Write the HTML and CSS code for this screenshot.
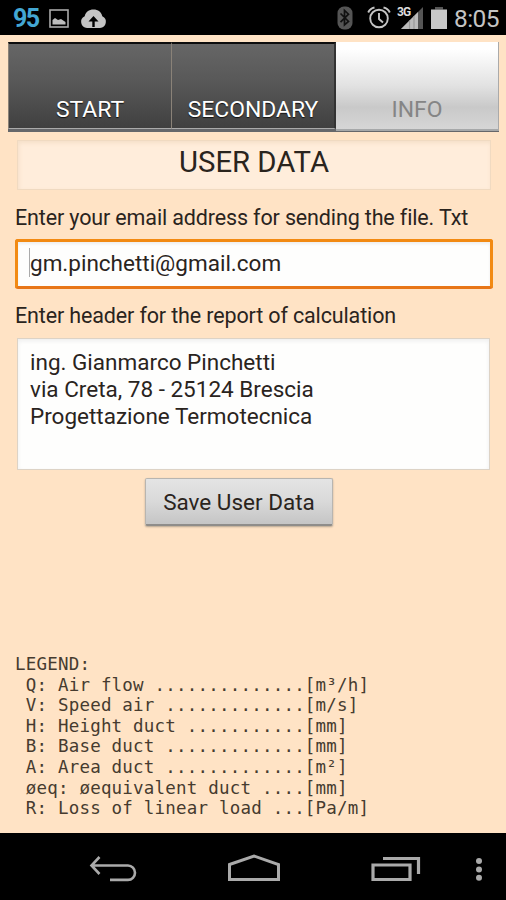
FILE: index.html
```html
<!DOCTYPE html>
<html lang="en">
<head>
<meta charset="utf-8">
<title>User Data</title>
<link rel="stylesheet" href="styles.css">
</head>
<body>
<div class="screen">
  <header class="status">
    <span class="percent">95</span>
    <svg class="i-image" width="20" height="19" viewBox="0 0 20 19"><rect x="1" y="1" width="18" height="17" fill="none" stroke="#aaa" stroke-width="1.6"/><path d="M3.500 15.500V11l2.500-2 3 2 3-1 4.500 3v2.500z" fill="#bdbdbd"/></svg>
    <svg class="i-cloud" width="27" height="20" viewBox="0 0 27 20"><path d="M7 19a6.200 6.200 0 0 1-2.300-11.800C5.500 3 9 .5 13.500.5S21.500 3 22.300 7.200A6.200 6.200 0 0 1 20 19z" fill="#c4c4c4"/><path d="M13.500 7l5 5.500h-3.800V18h-2.400v-5.500H8.500z" fill="#000"/></svg>
    <svg class="i-bt" width="16" height="24" viewBox="0 0 16 24"><rect x=".5" y=".5" width="15" height="23" rx="6.500" fill="#555"/><path d="M3.500 7.500l8 8L7.500 19V4.500l4 3.700-8 8" fill="none" stroke="#111" stroke-width="1.700"/></svg>
    <svg class="i-alarm" width="24" height="23" viewBox="0 0 24 23"><circle cx="12" cy="12.500" r="8.800" fill="none" stroke="#c4c4c4" stroke-width="1.900"/><path d="M12 7v6l4 3.500M1.200 6.500Q3 2.500 7.500 1.500M22.800 6.500Q21 2.500 16.500 1.500" fill="none" stroke="#c4c4c4" stroke-width="1.900"/></svg>
    <div class="signal">
      <svg width="22" height="23" viewBox="0 0 22 23"><path d="M0 23L22 1v22z" fill="#555"/><path d="M0 23L17 6v17z" fill="#bbb"/><path d="M8.500 14.500V23M13 10v13" stroke="#999" stroke-width="1.200"/></svg>
      <span class="net">3G</span>
    </div>
    <svg class="i-batt" width="16" height="22" viewBox="0 0 16 22"><path d="M4 0h8v2.500H4z" fill="#555"/><path d="M0 2.500h16V22H0z" fill="#c8c8c8"/></svg>
    <span class="clock">8:05</span>
  </header>

  <nav class="tabs">
    <div class="tab">START</div>
    <div class="tab">SECONDARY</div>
    <div class="tab active">INFO</div>
  </nav>

  <main>
    <h1 class="title"><span>USER DATA</span></h1>
    <label class="label email-label"><span>Enter your email address for sending the file. Txt</span></label>
    <div class="field email"><i class="caret"></i><span>gm.pinchetti@gmail.com</span></div>
    <label class="label report-label"><span>Enter header for the report of calculation</span></label>
    <div class="field report"><span>ing. Gianmarco Pinchetti</span><br><span>via Creta, 78 - 25124 Brescia</span><br><span>Progettazione Termotecnica</span></div>
    <button class="save">Save User Data</button>
    <pre class="legend">LEGEND:
 Q: Air flow ..............[m³/h]
 V: Speed air .............[m/s]
 H: Height duct ...........[mm]
 B: Base duct .............[mm]
 A: Area duct .............[m²]
 øeq: øequivalent duct ....[mm]
 R: Loss of linear load ...[Pa/m]</pre>
  </main>

  <footer class="navbar">
    <svg class="n-back" width="48" height="28" viewBox="0 0 48 28"><path d="M10.500 2L2.500 10.500l8 8.500M3 10.500h36a7 7.200 0 0 1 0 14.400H21" fill="none" stroke="#aaa" stroke-width="2.600"/></svg>
    <svg class="n-home" width="54" height="30" viewBox="0 0 54 30"><path d="M2.500 12.500L27 4l24.500 8.500v15h-49z" fill="none" stroke="#aaa" stroke-width="3"/></svg>
    <svg class="n-recent" width="50" height="27" viewBox="0 0 50 27"><path d="M2 10h37v14.500H2zM12 3.500h35.500v15.500" fill="none" stroke="#aaa" stroke-width="3.200"/></svg>
    <svg class="n-more" width="8" height="26" viewBox="0 0 8 26"><g fill="#aaa"><circle cx="4" cy="4" r="3"/><circle cx="4" cy="12.400" r="3"/><circle cx="4" cy="20.800" r="3"/></g></svg>
  </footer>
</div>
</body>
</html>
```
FILE: styles.css
```css
* { box-sizing: border-box; }
body { margin: 0; font-family: Roboto, "Liberation Sans", sans-serif; color: #2a241d; }
svg { display: block; flex: none; }
.screen { width: 506px; height: 900px; background: #ffe3c5; display: flex; flex-direction: column; overflow: hidden; }

.status { height: 35px; flex: none; background: #000; display: flex; align-items: flex-start; padding-left: 13px; }
.percent { width: 36px; margin-top: 5px; font-size: 25px; line-height: 28px; font-weight: 700; color: #43a7d3; letter-spacing: -1.7px; }
.i-image { margin-top: 9px; }
.i-cloud { margin: 9px 0 0 11px; }
.i-bt { margin: 6px 0 0 230px; }
.i-alarm { margin: 6px 0 0 14px; }
.signal { position: relative; margin: 6px 0 0 10px; }
.net { position: absolute; left: -4px; top: 0; font-size: 12px; line-height: 12px; font-weight: 700; color: #ddd; background: #000; letter-spacing: -.8px; }
.i-batt { margin: 7px 0 0 8px; }
.clock { margin: 5px 0 0 7px; font-size: 24.500px; line-height: 28px; color: #c4c4c4; letter-spacing: -.6px; }

.tabs { display: grid; grid-template-columns: 164px 164px 163px; height: 90px; flex: none; margin: 7px 7px 0 8px; border-bottom: 3px solid #66676a; }
.tab { border: 1px solid #8a8278; border-top: 2px solid #0d0d0d; border-bottom: 1px solid #aaa; background: linear-gradient(#666, #585858 45%, #404040); color: #fff; text-align: center; font-size: 22.900px; line-height: 28px; padding-top: 52px; text-shadow: 0 1px 1px #111; }
.tab + .tab { border-left: 0; }
.tab:nth-child(2) { border-right: 2px solid #333; }
.tab.active { margin-bottom: -2px; border: 0; border-right: 1px solid #aaa; border-bottom: 2px solid #a6a8a9; background: linear-gradient(#fff 8%, #e2e2e2 50%, #c9c9c9 75%, #d6d6d6); color: #858585; padding-top: 54px; text-shadow: none; }

main { flex: 1; display: flex; flex-direction: column; align-items: flex-start; padding-left: 15px; }
.title { width: 474px; height: 50px; margin: 8px 0 0 2px; border: 1px solid #f0dac1; background: #ffeddb; box-shadow: inset 1px 2px 4px #f5dfc8; text-align: center; font-size: 29.300px; line-height: 42px; font-weight: 400; }
.label { font-size: 21.500px; line-height: 26px; letter-spacing: -.14px; white-space: nowrap; }
.email-label { margin-top: 15px; }
.field { background: #fefefd; font-size: 22.500px; white-space: nowrap; }
.email { width: 478px; height: 50px; margin-top: 8px; border: 3px solid #f28a12; border-bottom-color: #e87617; border-radius: 3px; box-shadow: inset 0 2px 3px #eee; display: flex; padding: 6px 0 0 11px; line-height: 30px; }
.caret { width: 1px; height: 29px; background: #aaa; }
.report-label { margin-top: 14px; }
.report { width: 473px; height: 132px; margin: 9px 0 0 2px; border: 1px solid #ddd3c6; box-shadow: inset 0 2px 4px #eee; padding: 10px 12px; line-height: 26.800px; }
.save { width: 188px; height: 48px; margin: 8px 0 0 130px; padding: 1px 0 0; border: 1px solid #b8b5b0; border-bottom: 2px solid #8f8d8a; border-radius: 2px; background: linear-gradient(#e4e4e4, #d9d9d9 50%, #c5c5c5); box-shadow: 0 1px 2px #b5a490; font: 22.500px/44px Roboto, sans-serif; color: #2a241d; white-space: nowrap; }
.legend { margin: 128px 0 0; font: 17.500px/20.600px "DejaVu Sans Mono", monospace; letter-spacing: .2px; color: #463b2f; }

.navbar { height: 67px; flex: none; background: #000; display: flex; align-items: flex-start; padding-left: 89px; }
.n-back { margin-top: 22px; }
.n-home { margin: 19px 0 0 90px; }
.n-recent { margin: 22px 0 0 90px; }
.n-more { margin: 24px 0 0 54px; }
```
